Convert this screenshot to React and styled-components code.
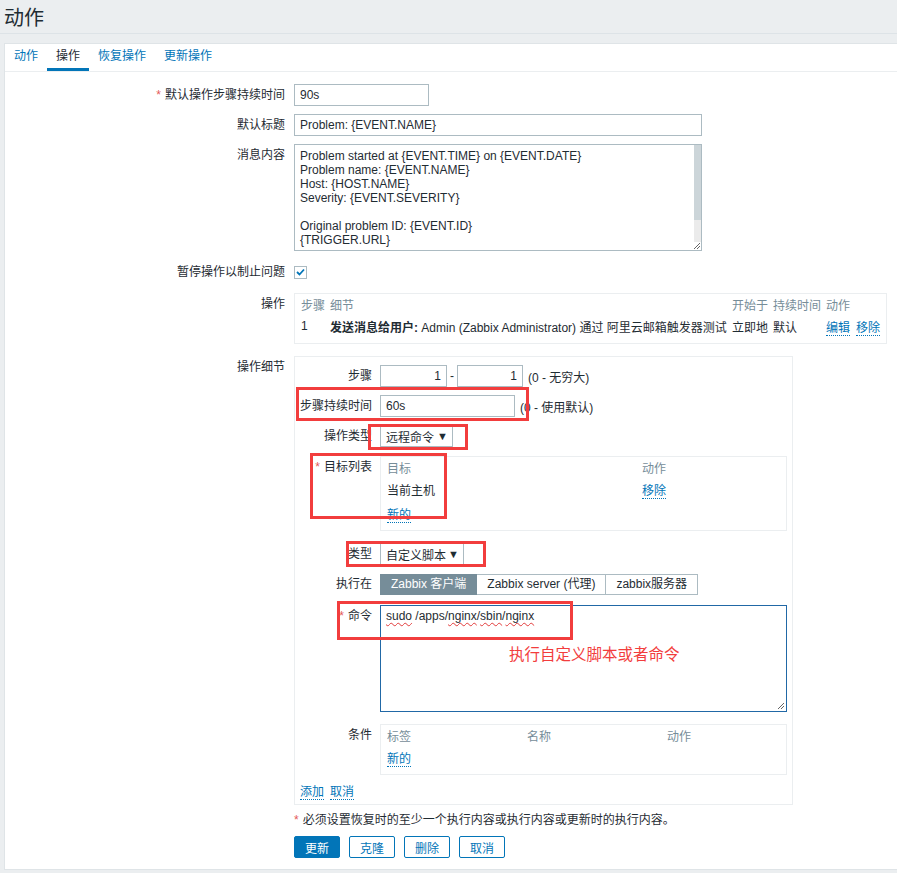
import styled, { createGlobalStyle } from "styled-components";

const GlobalStyle = createGlobalStyle`
  html, body {
    margin: 0;
    padding: 0;
    background: #ebeef0;
  }
  body {
    font-family: "Liberation Sans", Arial, "Noto Sans CJK SC", sans-serif;
    font-size: 12px;
    color: #1f2c33;
  }
`;

const Page = styled.div`
  position: relative;
  width: 897px;
  height: 873px;
  overflow: hidden;
`;

const Header = styled.div`
  height: 33px;
  padding-left: 4px;
  border-bottom: 1px solid #dde3e7;
  display: flex;
  align-items: center;
`;

const Title = styled.h1`
  margin: 0;
  font-size: 20px;
  font-weight: normal;
  color: #1f2c33;
`;

const Panel = styled.div`
  margin: 9px 0 0 4px;
  background: #fff;
  border: 1px solid #dfe4e7;
  border-right: none;
  padding-bottom: 11px;
`;

const Tabs = styled.div`
  display: flex;
  border-bottom: 1px solid #ebeef0;
`;

const Tab = styled.a`
  padding: 0 9px;
  line-height: 24px;
  border-bottom: 3px solid ${(p) => (p.$active ? "#0275b8" : "transparent")};
  color: ${(p) => (p.$active ? "#1f2c33" : "#0275b8")};
  cursor: pointer;
`;

const Form = styled.div`
  padding: 12px 9px 0 9px;
  display: flex;
  flex-direction: column;
`;

const Row = styled.div`
  display: grid;
  grid-template-columns: 271px 1fr;
  column-gap: 9px;
  align-items: start;
  margin-bottom: ${(p) => p.$mb ?? 8}px;
`;

const SubRow = styled(Row)`
  grid-template-columns: 72px 1fr;
  column-gap: 8px;
`;

const Label = styled.div`
  text-align: right;
  line-height: ${(p) => p.$lh ?? 22}px;
  white-space: nowrap;
  min-height: 22px;
`;

const Req = styled.span`
  color: #e45959;
  margin-right: 4px;
`;

const Field = styled.div`
  display: flex;
  align-items: center;
  gap: 5px;
  min-height: ${(p) => p.$h ?? 22}px;
`;

const Dash = styled.span`
  margin: 0 -2px;
`;

const TextInput = styled.input`
  box-sizing: border-box;
  height: 22px;
  width: ${(p) => p.$w}px;
  border: 1px solid #acbbc2;
  padding: 0 5px;
  font: inherit;
  color: #1f2c33;
  background: #fff;
  outline: none;
  text-align: ${(p) => (p.$right ? "right" : "left")};
`;

const MessageWrap = styled.div`
  position: relative;
  width: 408px;
  height: 107px;
`;

const MessageArea = styled.textarea`
  box-sizing: border-box;
  width: 100%;
  height: 100%;
  border: 1px solid #acbbc2;
  padding: 4px 14px 4px 5px;
  font: inherit;
  line-height: 14px;
  color: #1f2c33;
  resize: none;
  outline: none;
  overflow: hidden;
  display: block;
`;

const ScrollTrack = styled.div`
  position: absolute;
  top: 1px;
  right: 1px;
  bottom: 9px;
  width: 7px;
  background: #ebebeb;
`;

const ScrollThumb = styled.div`
  height: 75px;
  background: #ccd5d9;
`;

const Checkbox = styled.span`
  box-sizing: border-box;
  width: 13px;
  height: 13px;
  border: 1px solid #acbbc2;
  display: inline-flex;
  align-items: center;
  justify-content: center;
  background: #fff;
`;

const Box = styled.div`
  box-sizing: border-box;
  width: ${(p) => p.$w}px;
  border: 1px solid #ebeef0;
  padding: 0 6px 5px;
`;

const Table = styled.table`
  border-collapse: collapse;
  width: 100%;

  th {
    font-weight: normal;
    color: #768d99;
    text-align: left;
    height: 20px;
    padding: 0 5px 0 0;
    white-space: nowrap;
  }
  td {
    height: 24px;
    padding: 0 5px 0 0;
    white-space: nowrap;
  }
  th:last-child,
  td:last-child {
    padding-right: 0;
  }
`;

const Link = styled.a`
  color: #0275b8;
  text-decoration: none;
  border-bottom: 1px dotted #0275b8;
  cursor: pointer;
  & + & {
    margin-left: 6px;
  }
`;

const Hint = styled.span`
  white-space: nowrap;
`;

const Select = styled.div`
  box-sizing: border-box;
  height: 22px;
  width: ${(p) => p.$w}px;
  border: 1px solid #acbbc2;
  padding: 0 4px 0 5px;
  display: flex;
  align-items: center;
  justify-content: space-between;
  background: #fff;
`;

const Arrow = styled.span`
  font-size: 11px;
  color: #1f2c33;
`;

const Segmented = styled.div`
  display: flex;
`;

const Segment = styled.span`
  box-sizing: border-box;
  height: 21px;
  line-height: 19px;
  padding: 0 10px;
  border: 1px solid ${(p) => (p.$on ? "#768d99" : "#acbbc2")};
  background: ${(p) => (p.$on ? "#768d99" : "#fff")};
  color: ${(p) => (p.$on ? "#fff" : "#1f2c33")};
  white-space: nowrap;
  & + & {
    border-left: none;
  }
`;

const CommandBox = styled.div`
  position: relative;
  box-sizing: border-box;
  width: 407px;
  height: 107px;
  border: 1px solid #2168a6;
  padding: 3px 5px;
  line-height: 14px;
`;

const Misspelt = styled.span`
  text-decoration: underline wavy #e23b3b;
  text-decoration-thickness: 1px;
  text-underline-offset: 2px;
`;

const Grip = styled.svg`
  position: absolute;
  right: 1px;
  bottom: 1px;
`;

const Note = styled.div`
  position: absolute;
  left: 128px;
  top: 42px;
  color: #f23d3d;
  font-size: 15.5px;
  white-space: nowrap;
`;

const DetailsBox = styled.div`
  box-sizing: border-box;
  width: 499px;
  border: 1px solid #ebeef0;
  padding: 8px 5px 4px;
`;

const FooterLinks = styled.div`
  line-height: 16px;
`;

const Notice = styled.div`
  line-height: 16px;
  white-space: nowrap;
`;

const Buttons = styled.div`
  display: flex;
  gap: 9px;
`;

const Button = styled.button`
  box-sizing: border-box;
  height: 22px;
  padding: 0 10px;
  font: inherit;
  border-radius: 2px;
  border: 1px solid #0275b8;
  background: ${(p) => (p.$primary ? "#0275b8" : "#fff")};
  color: ${(p) => (p.$primary ? "#fff" : "#0275b8")};
  cursor: pointer;
`;

const RedBox = styled.div`
  position: absolute;
  box-sizing: border-box;
  left: ${(p) => p.$x}px;
  top: ${(p) => p.$y}px;
  width: ${(p) => p.$w}px;
  height: ${(p) => p.$h}px;
  border: 3px solid #f23d3d;
  pointer-events: none;
`;

const message = `Problem started at {EVENT.TIME} on {EVENT.DATE}
Problem name: {EVENT.NAME}
Host: {HOST.NAME}
Severity: {EVENT.SEVERITY}

Original problem ID: {EVENT.ID}
{TRIGGER.URL}`;

function Check() {
  return (
    <svg width="9" height="8" viewBox="0 0 9 8">
      <path d="M1 4 L3.5 6.5 L8 1.5" fill="none" stroke="#0275b8" strokeWidth="1.8" />
    </svg>
  );
}

function ResizeGrip() {
  return (
    <Grip width="9" height="9" viewBox="0 0 9 9">
      <path d="M8 2 L2 8 M8 5 L5 8" stroke="#666" strokeWidth="1" />
    </Grip>
  );
}

export default function App() {
  return (
    <Page>
      <GlobalStyle />
      <Header>
        <Title>动作</Title>
      </Header>
      <Panel>
        <Tabs>
          <Tab>动作</Tab>
          <Tab $active>操作</Tab>
          <Tab>恢复操作</Tab>
          <Tab>更新操作</Tab>
        </Tabs>
        <Form>
          <Row>
            <Label>
              <Req>*</Req>默认操作步骤持续时间
            </Label>
            <Field>
              <TextInput $w={135} defaultValue="90s" />
            </Field>
          </Row>
          <Row>
            <Label>默认标题</Label>
            <Field>
              <TextInput $w={408} defaultValue="Problem: {EVENT.NAME}" />
            </Field>
          </Row>
          <Row>
            <Label>消息内容</Label>
            <MessageWrap>
              <MessageArea readOnly defaultValue={message} spellCheck={false} />
              <ScrollTrack>
                <ScrollThumb />
              </ScrollTrack>
              <ResizeGrip />
            </MessageWrap>
          </Row>
          <Row>
            <Label $lh={26}>暂停操作以制止问题</Label>
            <Field $h={26}>
              <Checkbox>
                <Check />
              </Checkbox>
            </Field>
          </Row>
          <Row $mb={12}>
            <Label>操作</Label>
            <Box $w={593}>
              <Table>
                <thead>
                  <tr>
                    <th style={{ width: 24 }}>步骤</th>
                    <th>细节</th>
                    <th>开始于</th>
                    <th>持续时间</th>
                    <th>动作</th>
                  </tr>
                </thead>
                <tbody>
                  <tr>
                    <td>1</td>
                    <td>
                      <b>发送消息给用户:</b> Admin (Zabbix Administrator) 通过 阿里云邮箱触发器测试
                    </td>
                    <td>立即地</td>
                    <td>默认</td>
                    <td>
                      <Link>编辑</Link>
                      <Link>移除</Link>
                    </td>
                  </tr>
                </tbody>
              </Table>
            </Box>
          </Row>
          <Row $mb={7}>
            <Label>操作细节</Label>
            <DetailsBox>
              <SubRow>
                <Label>步骤</Label>
                <Field>
                  <TextInput $w={67} $right defaultValue="1" />
                  <Dash>-</Dash>
                  <TextInput $w={66} $right defaultValue="1" />
                  <Hint>(0 - 无穷大)</Hint>
                </Field>
              </SubRow>
              <SubRow>
                <Label>步骤持续时间</Label>
                <Field>
                  <TextInput $w={135} defaultValue="60s" />
                  <Hint>(0 - 使用默认)</Hint>
                </Field>
              </SubRow>
              <SubRow $mb={9}>
                <Label>操作类型</Label>
                <Field>
                  <Select $w={73}>
                    远程命令 <Arrow>▼</Arrow>
                  </Select>
                </Field>
              </SubRow>
              <SubRow $mb={12}>
                <Label>
                  <Req>*</Req>目标列表
                </Label>
                <Box $w={407}>
                  <Table>
                    <thead>
                      <tr>
                        <th style={{ width: 250 }}>目标</th>
                        <th>动作</th>
                      </tr>
                    </thead>
                    <tbody>
                      <tr>
                        <td style={{ height: 22 }}>当前主机</td>
                        <td>
                          <Link>移除</Link>
                        </td>
                      </tr>
                      <tr>
                        <td>
                          <Link>新的</Link>
                        </td>
                        <td />
                      </tr>
                    </tbody>
                  </Table>
                </Box>
              </SubRow>
              <SubRow $mb={9}>
                <Label>类型</Label>
                <Field>
                  <Select $w={84}>
                    自定义脚本 <Arrow>▼</Arrow>
                  </Select>
                </Field>
              </SubRow>
              <SubRow $mb={9}>
                <Label $lh={21}>执行在</Label>
                <Segmented>
                  <Segment $on>Zabbix 客户端</Segment>
                  <Segment>Zabbix server (代理)</Segment>
                  <Segment>zabbix服务器</Segment>
                </Segmented>
              </SubRow>
              <SubRow $mb={12}>
                <Label>
                  <Req>*</Req>命令
                </Label>
                <CommandBox>
                  <Misspelt>sudo</Misspelt> /apps/<Misspelt>nginx</Misspelt>/<Misspelt>sbin</Misspelt>/
                  <Misspelt>nginx</Misspelt>
                  <Note>执行自定义脚本或者命令</Note>
                  <ResizeGrip />
                </CommandBox>
              </SubRow>
              <SubRow $mb={9}>
                <Label>条件</Label>
                <Box $w={407}>
                  <Table>
                    <thead>
                      <tr>
                        <th style={{ width: 135 }}>标签</th>
                        <th style={{ width: 135 }}>名称</th>
                        <th>动作</th>
                      </tr>
                    </thead>
                    <tbody>
                      <tr>
                        <td>
                          <Link>新的</Link>
                        </td>
                        <td />
                        <td />
                      </tr>
                    </tbody>
                  </Table>
                </Box>
              </SubRow>
              <FooterLinks>
                <Link>添加</Link>
                <Link>取消</Link>
              </FooterLinks>
            </DetailsBox>
          </Row>
          <Row $mb={8}>
            <span />
            <Notice>
              <Req>*</Req>必须设置恢复时的至少一个执行内容或执行内容或更新时的执行内容。
            </Notice>
          </Row>
          <Row $mb={0}>
            <span />
            <Buttons>
              <Button $primary>更新</Button>
              <Button>克隆</Button>
              <Button>删除</Button>
              <Button>取消</Button>
            </Buttons>
          </Row>
        </Form>
      </Panel>
      <RedBox $x={296} $y={387} $w={233} $h={34} />
      <RedBox $x={368} $y={424} $w={100} $h={26} />
      <RedBox $x={310} $y={453} $w={137} $h={66} />
      <RedBox $x={346} $y={541} $w={140} $h={26} />
      <RedBox $x={337} $y={601} $w={236} $h={39} />
    </Page>
  );
}
